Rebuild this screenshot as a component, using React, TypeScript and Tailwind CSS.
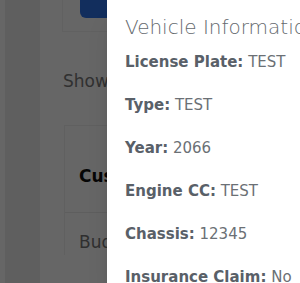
const vehicle = [
  { label: "License Plate:", value: "TEST" },
  { label: "Type:", value: "TEST" },
  { label: "Year:", value: "2066" },
  { label: "Engine CC:", value: "TEST" },
  { label: "Chassis:", value: "12345" },
  { label: "Insurance Claim:", value: "No" },
];

export default function App() {
  return (
    <div
      className="relative h-[283px] w-[300px] overflow-hidden bg-white"
      style={{ fontFamily: "'DejaVu Sans', 'Noto Sans', sans-serif" }}
    >
      {/* page behind the drawer */}
      <div className="flex h-full">
        <div className="w-[5px] bg-white" />
        <div className="w-[35px] bg-[#eeeeee]" />
        <div className="w-[200px] pl-[22px]">
          <div className="flex h-[32px] border-l border-b border-[#f3f3f3] pl-[17px]">
            <div className="h-[18px] w-[90px] rounded-b-md bg-[#2f74e8]" />
          </div>
          <div className="mt-[37px] pl-[1px] text-[17px] text-[#7a7a7a]">Show</div>
          <div className="mt-[30px] ml-[2px] border-l border-t border-[#f0f0f0]">
            <div className="flex h-[86px] items-end pb-[22px] pl-[14px] text-[17px] font-semibold text-[#111]">
              Customer
            </div>
            <div className="border-t border-[#ececec] pl-[14px] pt-[17px] text-[17px] text-[#777]">
              Budget
            </div>
          </div>
        </div>
      </div>

      {/* overlay */}
      <div className="absolute inset-0 bg-black/60" />

      {/* drawer */}
      <div className="absolute inset-y-0 left-[107px] w-[330px] bg-white pl-[18px] pt-[12px] shadow-xl">
        <h2 className="whitespace-nowrap text-[20px] font-light text-[#64696e]">
          Vehicle Information
        </h2>
        <div className="mt-[9px] flex flex-col gap-[20px]">
          {vehicle.map((item) => (
            <p key={item.label} className="whitespace-nowrap text-[15px] leading-[23px] text-[#6b7075]">
              <span className="font-bold text-[#596068]">{item.label}</span> {item.value}
            </p>
          ))}
        </div>
      </div>
    </div>
  );
}
